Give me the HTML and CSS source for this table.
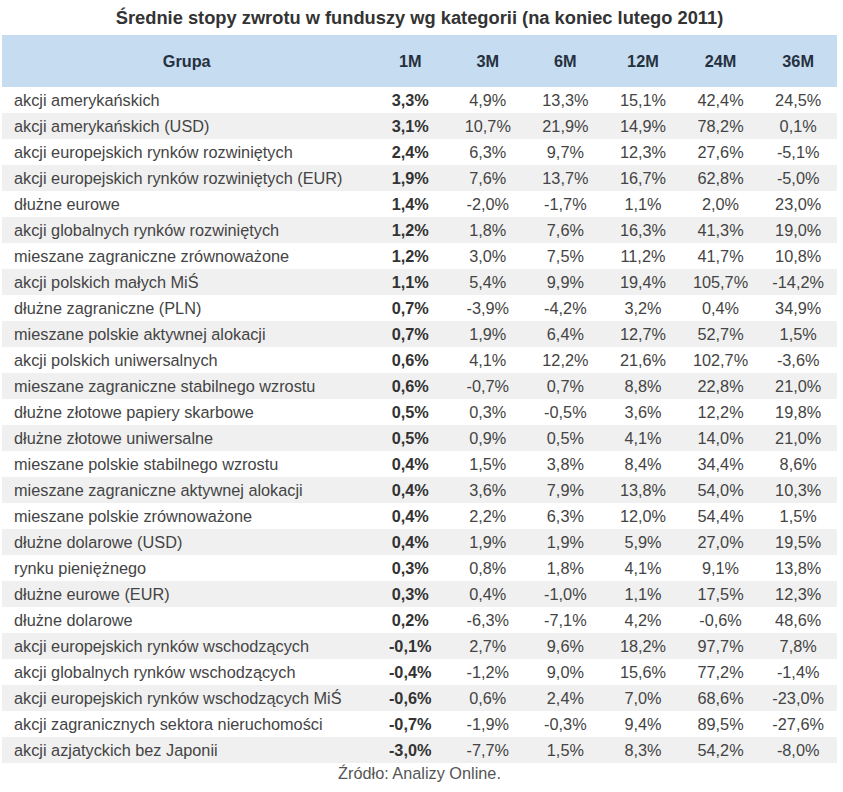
FILE: index.html
```html
<!DOCTYPE html>
<html lang="pl">
<head>
<meta charset="utf-8">
<title>Średnie stopy zwrotu</title>
<link rel="stylesheet" href="styles.css">
</head>
<body>
<div class="wrap">
<h1 class="title">Średnie stopy zwrotu w funduszy wg kategorii (na koniec lutego 2011)</h1>
<table class="tbl">
<thead>
<tr><th class="grp">Grupa</th><th>1M</th><th>3M</th><th>6M</th><th>12M</th><th>24M</th><th>36M</th></tr>
</thead>
<tbody>
<tr><td class="name">akcji amerykańskich</td><td class="b">3,3%</td><td>4,9%</td><td>13,3%</td><td>15,1%</td><td>42,4%</td><td>24,5%</td></tr>
<tr><td class="name">akcji amerykańskich (USD)</td><td class="b">3,1%</td><td>10,7%</td><td>21,9%</td><td>14,9%</td><td>78,2%</td><td>0,1%</td></tr>
<tr><td class="name">akcji europejskich rynków rozwiniętych</td><td class="b">2,4%</td><td>6,3%</td><td>9,7%</td><td>12,3%</td><td>27,6%</td><td>-5,1%</td></tr>
<tr><td class="name">akcji europejskich rynków rozwiniętych (EUR)</td><td class="b">1,9%</td><td>7,6%</td><td>13,7%</td><td>16,7%</td><td>62,8%</td><td>-5,0%</td></tr>
<tr><td class="name">dłużne eurowe</td><td class="b">1,4%</td><td>-2,0%</td><td>-1,7%</td><td>1,1%</td><td>2,0%</td><td>23,0%</td></tr>
<tr><td class="name">akcji globalnych rynków rozwiniętych</td><td class="b">1,2%</td><td>1,8%</td><td>7,6%</td><td>16,3%</td><td>41,3%</td><td>19,0%</td></tr>
<tr><td class="name">mieszane zagraniczne zrównoważone</td><td class="b">1,2%</td><td>3,0%</td><td>7,5%</td><td>11,2%</td><td>41,7%</td><td>10,8%</td></tr>
<tr><td class="name">akcji polskich małych MiŚ</td><td class="b">1,1%</td><td>5,4%</td><td>9,9%</td><td>19,4%</td><td>105,7%</td><td>-14,2%</td></tr>
<tr><td class="name">dłużne zagraniczne (PLN)</td><td class="b">0,7%</td><td>-3,9%</td><td>-4,2%</td><td>3,2%</td><td>0,4%</td><td>34,9%</td></tr>
<tr><td class="name">mieszane polskie aktywnej alokacji</td><td class="b">0,7%</td><td>1,9%</td><td>6,4%</td><td>12,7%</td><td>52,7%</td><td>1,5%</td></tr>
<tr><td class="name">akcji polskich uniwersalnych</td><td class="b">0,6%</td><td>4,1%</td><td>12,2%</td><td>21,6%</td><td>102,7%</td><td>-3,6%</td></tr>
<tr><td class="name">mieszane zagraniczne stabilnego wzrostu</td><td class="b">0,6%</td><td>-0,7%</td><td>0,7%</td><td>8,8%</td><td>22,8%</td><td>21,0%</td></tr>
<tr><td class="name">dłużne złotowe papiery skarbowe</td><td class="b">0,5%</td><td>0,3%</td><td>-0,5%</td><td>3,6%</td><td>12,2%</td><td>19,8%</td></tr>
<tr><td class="name">dłużne złotowe uniwersalne</td><td class="b">0,5%</td><td>0,9%</td><td>0,5%</td><td>4,1%</td><td>14,0%</td><td>21,0%</td></tr>
<tr><td class="name">mieszane polskie stabilnego wzrostu</td><td class="b">0,4%</td><td>1,5%</td><td>3,8%</td><td>8,4%</td><td>34,4%</td><td>8,6%</td></tr>
<tr><td class="name">mieszane zagraniczne aktywnej alokacji</td><td class="b">0,4%</td><td>3,6%</td><td>7,9%</td><td>13,8%</td><td>54,0%</td><td>10,3%</td></tr>
<tr><td class="name">mieszane polskie zrównoważone</td><td class="b">0,4%</td><td>2,2%</td><td>6,3%</td><td>12,0%</td><td>54,4%</td><td>1,5%</td></tr>
<tr><td class="name">dłużne dolarowe (USD)</td><td class="b">0,4%</td><td>1,9%</td><td>1,9%</td><td>5,9%</td><td>27,0%</td><td>19,5%</td></tr>
<tr><td class="name">rynku pieniężnego</td><td class="b">0,3%</td><td>0,8%</td><td>1,8%</td><td>4,1%</td><td>9,1%</td><td>13,8%</td></tr>
<tr><td class="name">dłużne eurowe (EUR)</td><td class="b">0,3%</td><td>0,4%</td><td>-1,0%</td><td>1,1%</td><td>17,5%</td><td>12,3%</td></tr>
<tr><td class="name">dłużne dolarowe</td><td class="b">0,2%</td><td>-6,3%</td><td>-7,1%</td><td>4,2%</td><td>-0,6%</td><td>48,6%</td></tr>
<tr><td class="name">akcji europejskich rynków wschodzących</td><td class="b">-0,1%</td><td>2,7%</td><td>9,6%</td><td>18,2%</td><td>97,7%</td><td>7,8%</td></tr>
<tr><td class="name">akcji globalnych rynków wschodzących</td><td class="b">-0,4%</td><td>-1,2%</td><td>9,0%</td><td>15,6%</td><td>77,2%</td><td>-1,4%</td></tr>
<tr><td class="name">akcji europejskich rynków wschodzących MiŚ</td><td class="b">-0,6%</td><td>0,6%</td><td>2,4%</td><td>7,0%</td><td>68,6%</td><td>-23,0%</td></tr>
<tr><td class="name">akcji zagranicznych sektora nieruchomości</td><td class="b">-0,7%</td><td>-1,9%</td><td>-0,3%</td><td>9,4%</td><td>89,5%</td><td>-27,6%</td></tr>
<tr><td class="name">akcji azjatyckich bez Japonii</td><td class="b">-3,0%</td><td>-7,7%</td><td>1,5%</td><td>8,3%</td><td>54,2%</td><td>-8,0%</td></tr>
</tbody>
</table>
<p class="source">Źródło: Analizy Online.</p>
</div>
</body>
</html>
```
FILE: styles.css
```css
html, body {
  margin: 0;
  padding: 0;
  background: #ffffff;
}
.wrap {
  width: 835px;
  padding: 0 6px 0 2px;
  font-family: "Liberation Sans", Arial, sans-serif;
  color: #333333;
}
.title {
  margin: 0;
  height: 35px;
  line-height: 35px;
  font-size: 18.3px;
  font-weight: bold;
  text-align: center;
  color: #333333;
}
.tbl {
  width: 835px;
  border-collapse: collapse;
  table-layout: fixed;
  font-size: 16.3px;
}
.tbl th {
  height: 52px;
  padding: 0;
  background: #c6dcf1;
  color: #26313f;
  font-weight: bold;
  font-size: 16.3px;
  text-align: center;
  width: 77.5px;
}
.tbl th.grp {
  width: 369px;
}
.tbl td {
  height: 26px;
  padding: 1px 0 0;
  box-sizing: border-box;
  text-align: center;
  color: #444444;
}
.tbl td.name {
  text-align: left;
  padding-left: 12px;
}
.tbl td.b {
  font-weight: bold;
  color: #333333;
}
.tbl tbody tr:nth-child(even) td {
  background: #f0f0f0;
}
.source {
  margin: 0;
  height: 22px;
  line-height: 20px;
  text-align: center;
  font-size: 16.3px;
  color: #555555;
}
```
